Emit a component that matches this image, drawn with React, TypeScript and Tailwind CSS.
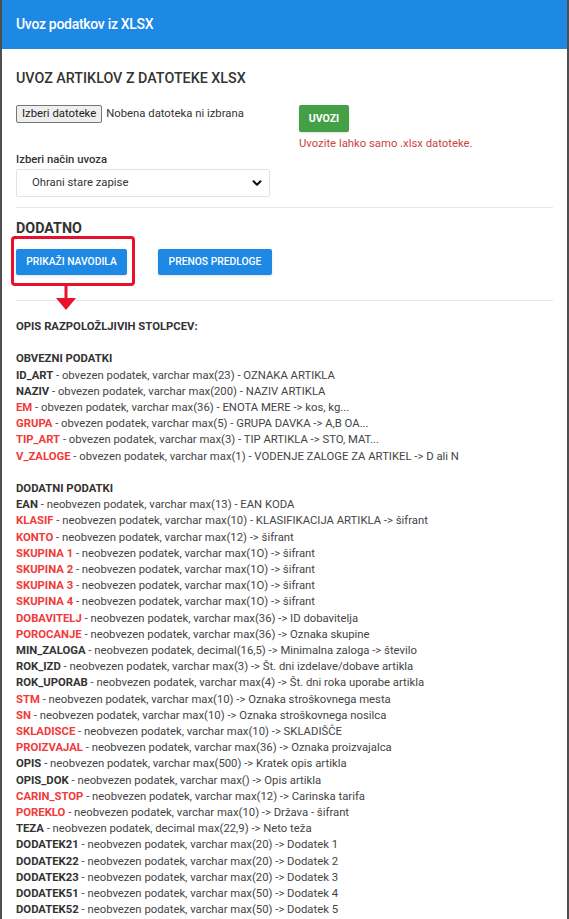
import React from "react";

type Col = { key: string; desc: string; red?: boolean };

const obvezni: Col[] = [
  { key: "ID_ART", desc: "obvezen podatek, varchar max(23) - OZNAKA ARTIKLA" },
  { key: "NAZIV", desc: "obvezen podatek, varchar max(200) - NAZIV ARTIKLA" },
  { key: "EM", desc: "obvezen podatek, varchar max(36) - ENOTA MERE -> kos, kg...", red: true },
  { key: "GRUPA", desc: "obvezen podatek, varchar max(5) - GRUPA DAVKA -> A,B OA...", red: true },
  { key: "TIP_ART", desc: "obvezen podatek, varchar max(3) - TIP ARTIKLA -> STO, MAT...", red: true },
  { key: "V_ZALOGE", desc: "obvezen podatek, varchar max(1) - VODENJE ZALOGE ZA ARTIKEL -> D ali N", red: true },
];

const dodatni: Col[] = [
  { key: "EAN", desc: "neobvezen podatek, varchar max(13) - EAN KODA" },
  { key: "KLASIF", desc: "neobvezen podatek, varchar max(10) - KLASIFIKACIJA ARTIKLA -> šifrant", red: true },
  { key: "KONTO", desc: "neobvezen podatek, varchar max(12) -> šifrant", red: true },
  { key: "SKUPINA 1", desc: "neobvezen podatek, varchar max(1O) -> šifrant", red: true },
  { key: "SKUPINA 2", desc: "neobvezen podatek, varchar max(1O) -> šifrant", red: true },
  { key: "SKUPINA 3", desc: "neobvezen podatek, varchar max(1O) -> šifrant", red: true },
  { key: "SKUPINA 4", desc: "neobvezen podatek, varchar max(1O) -> šifrant", red: true },
  { key: "DOBAVITELJ", desc: "neobvezen podatek, varchar max(36) -> ID dobavitelja", red: true },
  { key: "POROCANJE", desc: "neobvezen podatek, varchar max(36) -> Oznaka skupine", red: true },
  { key: "MIN_ZALOGA", desc: "neobvezen podatek, decimal(16,5) -> Minimalna zaloga -> število" },
  { key: "ROK_IZD", desc: "neobvezen podatek, varchar max(3) -> Št. dni izdelave/dobave artikla" },
  { key: "ROK_UPORAB", desc: "neobvezen podatek, varchar max(4) -> Št. dni roka uporabe artikla" },
  { key: "STM", desc: "neobvezen podatek, varchar max(10) -> Oznaka stroškovnega mesta", red: true },
  { key: "SN", desc: "neobvezen podatek, varchar max(10) -> Oznaka stroškovnega nosilca", red: true },
  { key: "SKLADISCE", desc: "neobvezen podatek, varchar max(10) -> SKLADIŠČE", red: true },
  { key: "PROIZVAJAL", desc: "neobvezen podatek, varchar max(36) -> Oznaka proizvajalca", red: true },
  { key: "OPIS", desc: "neobvezen podatek, varchar max(500) -> Kratek opis artikla" },
  { key: "OPIS_DOK", desc: "neobvezen podatek, varchar max() -> Opis artikla" },
  { key: "CARIN_STOP", desc: "neobvezen podatek, varchar max(12) -> Carinska tarifa", red: true },
  { key: "POREKLO", desc: "neobvezen podatek, varchar max(10) -> Država - šifrant", red: true },
  { key: "TEZA", desc: "neobvezen podatek, decimal max(22,9) -> Neto teža" },
  { key: "DODATEK21", desc: "neobvezen podatek, varchar max(20) -> Dodatek 1" },
  { key: "DODATEK22", desc: "neobvezen podatek, varchar max(20) -> Dodatek 2" },
  { key: "DODATEK23", desc: "neobvezen podatek, varchar max(20) -> Dodatek 3" },
  { key: "DODATEK51", desc: "neobvezen podatek, varchar max(50) -> Dodatek 4" },
  { key: "DODATEK52", desc: "neobvezen podatek, varchar max(50) -> Dodatek 5" },
];

function Row({ c }: { c: Col }) {
  return (
    <div className="whitespace-nowrap">
      <span className={c.red ? "font-bold text-[#f23a3a]" : "font-bold text-[#333]"}>{c.key}</span>
      {" - " + c.desc}
    </div>
  );
}

export default function App() {
  return (
    <div className="flex min-h-screen bg-[#4f4f4f] pl-[2px] pr-[2px] font-['Roboto',sans-serif]">
      <div className="flex-1 bg-white">
        <div className="flex h-[49px] items-center bg-[#1e88e5] px-[14px] text-[14px] font-medium tracking-[-0.3px] text-white">
          Uvoz podatkov iz XLSX
        </div>

        <div className="px-[14px] text-[11.3px] text-[#444]">
          <h2 className="mt-[19px] text-[14.3px] font-medium leading-[20px] text-[#333]">UVOZ ARTIKLOV Z DATOTEKE XLSX</h2>

          <div className="mt-[17px] flex items-start gap-[29px]">
            <div className="w-[254px]">
              <div className="flex h-[18px] items-center">
                <span className="flex h-[18px] items-center rounded-[2px] border border-[#767676] bg-[#efefef] px-[5px] text-[#222]">
                  Izberi datoteke
                </span>
                <span className="ml-[4px] text-[#333]">Nobena datoteka ni izbrana</span>
              </div>
              <div className="mt-[30px] font-medium leading-[14px] text-[#333]">Izberi način uvoza</div>
              <div className="mt-[2px] flex h-[28px] items-center justify-between rounded-[2px] border border-[#e3e3e3] pl-[15px] pr-[5px] text-[#333]">
                <span>Ohrani stare zapise</span>
                <svg width="14" height="14" viewBox="0 0 24 24" fill="none" stroke="#111" strokeWidth="3.5" strokeLinecap="round" strokeLinejoin="round">
                  <path d="M6 9l6 6 6-6" />
                </svg>
              </div>
            </div>
            <div>
              <button className="flex h-[27px] w-[50px] items-center justify-center rounded-[2px] bg-[#43a047] text-[10.5px] font-bold text-white shadow-sm">
                UVOZI
              </button>
              <div className="mt-[5px] leading-[14px] text-[#c9443f]">Uvozite lahko samo .xlsx datoteke.</div>
            </div>
          </div>

          <div className="mt-[10px] border-t border-[#e6e6e6]" />

          <h2 className="mt-[10px] text-[14.3px] font-bold leading-[20px] text-[#333]">DODATNO</h2>

          <div className="relative mt-[11px] flex gap-[31px]">
            <button className="flex h-[26px] w-[111px] items-center justify-center rounded-[2px] bg-[#1e88e5] text-[10.3px] font-medium text-white shadow">
              PRIKAŽI NAVODILA
            </button>
            <button className="flex h-[26px] w-[114px] items-center justify-center rounded-[2px] bg-[#1e88e5] text-[10.3px] font-medium text-white shadow">
              PRENOS PREDLOGE
            </button>
            {/* red callout around the first button */}
            <div className="absolute left-[-5px] top-[-13px] h-[50px] w-[124px] rounded-[4px] border-[3px] border-[#e8102a]" />
            <svg className="absolute left-[39px] top-[37px]" width="22" height="26" viewBox="0 0 22 26">
              <rect x="9.5" y="0" width="3" height="14" fill="#e8102a" />
              <path d="M1 12 L21 12 L11 24 Z" fill="#e8102a" />
            </svg>
          </div>

          <div className="mt-[25px] border-t border-[#e6e6e6]" />

          <div className="mt-[18px] leading-[16.2px]">
            <div className="font-bold text-[#333]">OPIS RAZPOLOŽLJIVIH STOLPCEV:</div>
            <div className="h-[16.2px]" />
            <div className="font-bold text-[#333]">OBVEZNI PODATKI</div>
            {obvezni.map((c) => (
              <Row key={c.key} c={c} />
            ))}
            <div className="h-[16.2px]" />
            <div className="font-bold text-[#333]">DODATNI PODATKI</div>
            {dodatni.map((c) => (
              <Row key={c.key} c={c} />
            ))}
          </div>
        </div>
      </div>
    </div>
  );
}
